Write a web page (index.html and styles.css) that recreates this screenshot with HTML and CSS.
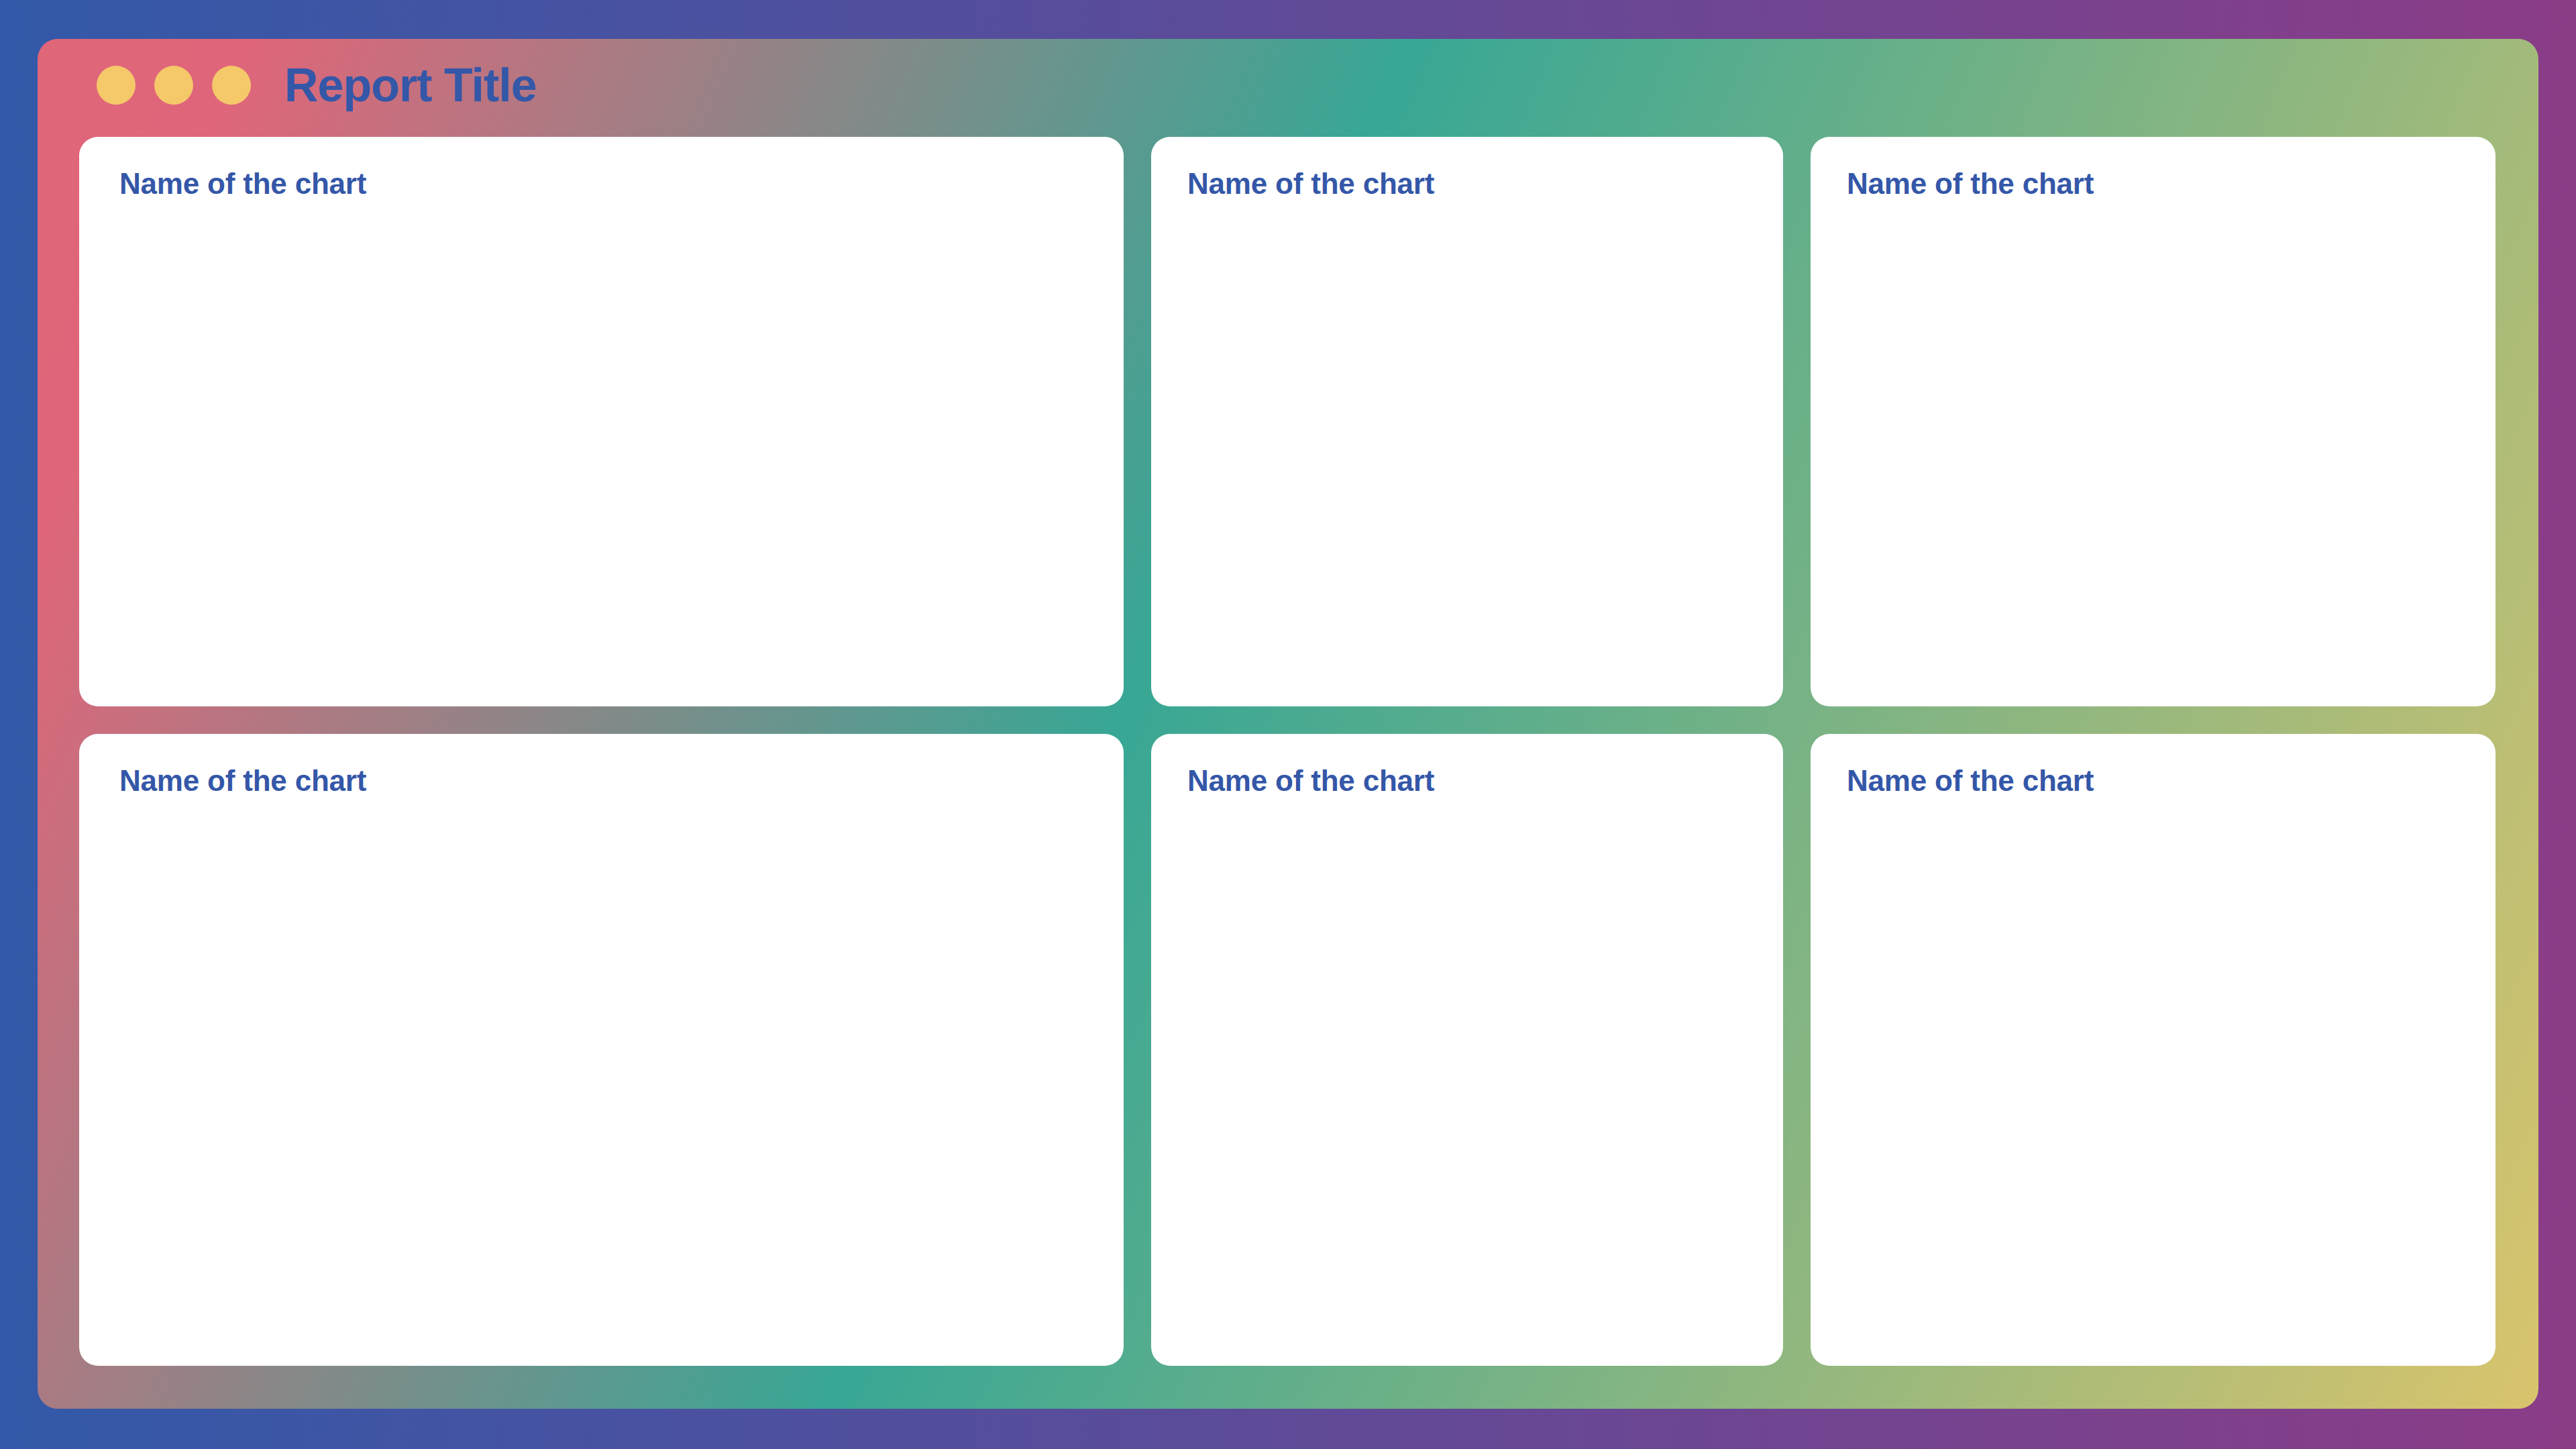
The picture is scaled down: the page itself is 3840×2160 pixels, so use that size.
FILE: index.html
```html
<!DOCTYPE html>
<html lang="en">
<head>
    <meta charset="UTF-8">
    <meta name="viewport" content="width=device-width, initial-scale=1.0">
    <title>Report Title</title>
    <link rel="stylesheet" href="styles.css">
</head>
<body>

<div class="report">
    <div class="report-header">
        <div class="dots">
            <span class="dot"></span>
            <span class="dot"></span>
            <span class="dot"></span>
        </div>
        <h1 class="report-title">Report Title</h1>
    </div>

    <div class="charts">
        <div class="chart-card"><h2 class="chart-name">Name of the chart</h2></div>
        <div class="chart-card"><h2 class="chart-name">Name of the chart</h2></div>
        <div class="chart-card"><h2 class="chart-name">Name of the chart</h2></div>
        <div class="chart-card"><h2 class="chart-name">Name of the chart</h2></div>
        <div class="chart-card"><h2 class="chart-name">Name of the chart</h2></div>
        <div class="chart-card"><h2 class="chart-name">Name of the chart</h2></div>
    </div>
</div>

</body>
</html>
```

FILE: styles.css
```css
html, body {
    height: 100%;
}
body {
    margin: 0;
    font-family: 'Liberation Sans', Arial, sans-serif;
    background: linear-gradient(to right, #3259a9, #8b3c87);
    display: flex;
    box-sizing: border-box;
    padding: 58px 56px 60px 56px;
}
.report {
    flex: 1;
    display: flex;
    flex-direction: column;
    border-radius: 30px;
    padding: 0 64px 64px 62px;
    background: linear-gradient(113deg, #e0667a 0%, #df667a 7%, #38a795 44.5%, #d9c46d 100%);
}
.report-header {
    display: flex;
    align-items: center;
    padding: 40px 0 0 26px;
    margin-bottom: 48px;
}
.dots {
    display: flex;
    gap: 28px;
}
.dot {
    width: 58px;
    height: 58px;
    border-radius: 50%;
    background-color: #f5c86a;
}
.report-title {
    margin: 0 0 0 50px;
    font-size: 70px;
    line-height: 58px;
    font-weight: bold;
    letter-spacing: -1px;
    color: #3457a8;
}
.charts {
    flex: 1;
    display: grid;
    grid-template-columns: 1557fr 942fr 1021fr;
    grid-template-rows: 849fr 942fr;
    gap: 41px;
}
.chart-card {
    background: #fff;
    border-radius: 28px;
    padding: 45px 54px;
}
.chart-card:nth-child(3n+1) {
    padding-left: 60px;
}
.chart-name {
    margin: 0;
    font-size: 44px;
    font-weight: bold;
    letter-spacing: -0.2px;
    color: #3457a8;
}
```
